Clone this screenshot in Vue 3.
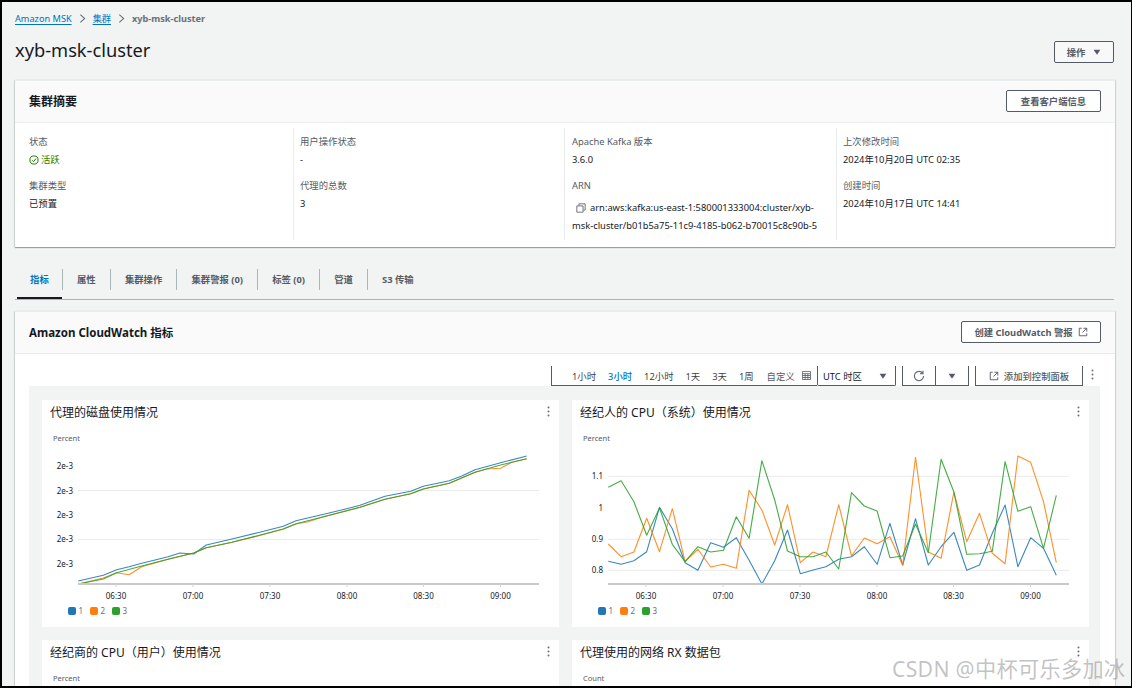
<script setup>
const xAt = i => 36.3 + 12.8 * i
const toLine = ys => ys.map((y, i) => `${xAt(i).toFixed(1)},${(y / 3 + 4).toFixed(1)}`).join(' ')
const toPairs = ps => ps.map(([x, y]) => `${(x / 3 - 2).toFixed(1)},${(y / 3 + 4).toFixed(1)}`).join(' ')
const BLUE = '#1f77b4', ORANGE = '#ff7f0e', GREEN = '#2ca02c'

const green = [[115,462],[190,447],[230,428],[305,408],[384,388],[461,369],[499,353],[576,337],[653,317],[730,297],[768,281],[845,262],[960,232],[1035,208],[1112,191],[1150,177],[1228,160],[1305,127],[1382,105],[1460,86]]
const blue = [[115,453],[190,436],[230,419],[267,410],[305,400],[345,390],[384,380],[420,369],[461,372],[499,345],[576,327],[653,308],[730,289],[768,272],[845,254],[920,236],[960,226],[1035,199],[1112,184],[1150,169],[1228,152],[1265,138],[1305,119],[1382,98],[1460,78]]
const orange = [[115,462],[190,444],[230,428],[267,434],[305,410],[384,388],[461,369],[499,353],[576,337],[653,318],[730,297],[768,282],[805,275],[845,262],[960,232],[1035,208],[1112,191],[1150,177],[1228,160],[1305,127],[1340,117],[1382,115],[1415,97],[1460,86]]

const rightBlue = [394,403,392,365,232,296,398,421,338,352,323,391,462,392,300,431,420,410,388,380,350,403,280,405,266,405,350,307,421,405,310,225,410,323,355,436]
const rightOrange = [342,380,366,265,365,236,395,358,411,403,415,181,240,345,224,398,366,380,224,378,324,341,320,406,82,366,385,186,335,250,370,401,78,97,215,398]
const rightGreen = [172,152,215,316,234,343,395,350,366,361,260,325,92,210,363,380,380,366,417,188,228,243,383,378,282,368,88,186,373,371,364,95,244,230,355,196]

const times = ['06:30', '07:00', '07:30', '08:00', '08:30', '09:00']
const timeX = [74, 151, 228, 305, 381.5, 458.5]
const legend = [
  { c: BLUE, l: '1', x: 26 },
  { c: ORANGE, l: '2', x: 48 },
  { c: GREEN, l: '3', x: 70 }
]

const widgets = [
  {
    title: '代理的磁盘使用情况', unit: 'Percent',
    ticks: [['2e-3', 40], ['2e-3', 64.5], ['2e-3', 89], ['2e-3', 113], ['2e-3', 138]],
    grid: [64.5, 113.5],
    series: [
      { c: BLUE, p: toPairs(blue) },
      { c: ORANGE, p: toPairs(orange) },
      { c: GREEN, p: toPairs(green) }
    ]
  },
  {
    title: '经纪人的 CPU（系统）使用情况', unit: 'Percent',
    ticks: [['1.1', 50], ['1', 82], ['0.9', 113], ['0.8', 144]],
    grid: [50.3, 113.3, 144.3],
    series: [
      { c: BLUE, p: toLine(rightBlue) },
      { c: ORANGE, p: toLine(rightOrange) },
      { c: GREEN, p: toLine(rightGreen) }
    ]
  },
  { title: '经纪商的 CPU（用户）使用情况', unit: 'Percent', ticks: [], grid: [], series: [], empty: true },
  { title: '代理使用的网络 RX 数据包', unit: 'Count', ticks: [], grid: [], series: [], empty: true }
]

const ranges = [
  { t: '1小时' }, { t: '3小时', on: true }, { t: '12小时' }, { t: '1天' }, { t: '3天' }, { t: '1周' }
]
const tabs = ['指标', '属性', '集群操作', '集群警报 (0)', '标签 (0)', '管道', 'S3 传输']
</script>

<template>
  <div class="frame">
    <nav class="crumbs">
      <a class="link">Amazon MSK</a>
      <svg class="chev" viewBox="0 0 8 12"><path d="M1.5 1.5 6.5 6l-5 4.5" /></svg>
      <a class="link">集群</a>
      <svg class="chev" viewBox="0 0 8 12"><path d="M1.5 1.5 6.5 6l-5 4.5" /></svg>
      <span class="current">xyb-msk-cluster</span>
    </nav>

    <header class="head">
      <h1>xyb-msk-cluster</h1>
      <button class="btn act">操作<svg class="tri" viewBox="0 0 10 8"><path d="M0.5 1h9L5 7.5z" /></svg></button>
    </header>

    <section class="card summary">
      <div class="card-head">
        <h2>集群摘要</h2>
        <button class="btn client">查看客户端信息</button>
      </div>
      <div class="cols">
        <div class="col first">
          <div class="lab">状态</div>
          <div class="val ok">
            <svg class="check" viewBox="0 0 12 12"><circle cx="6" cy="6" r="4.9" /><path d="M3.6 6.2 5.4 8l3-3.6" /></svg>活跃
          </div>
          <div class="lab gap">集群类型</div>
          <div class="val">已预置</div>
        </div>
        <div class="col">
          <div class="lab">用户操作状态</div>
          <div class="val">-</div>
          <div class="lab gap">代理的总数</div>
          <div class="val">3</div>
        </div>
        <div class="col third">
          <div class="lab">Apache Kafka 版本</div>
          <div class="val">3.6.0</div>
          <div class="lab gap">ARN</div>
          <div class="val arn">
            <svg class="copy" viewBox="0 0 12 12"><path d="M3.5 3V1h7.5v7.5H9M1 3.5h7.5V11H1z" /></svg>arn:aws:kafka:us-east-1:580001333004:cluster/xyb-<br />msk-cluster/b01b5a75-11c9-4185-b062-b70015c8c90b-5
          </div>
        </div>
        <div class="col last">
          <div class="lab">上次修改时间</div>
          <div class="val">2024年10月20日 UTC 02:35</div>
          <div class="lab gap">创建时间</div>
          <div class="val">2024年10月17日 UTC 14:41</div>
        </div>
      </div>
    </section>

    <div class="tabs">
      <div v-for="(t, i) in tabs" :key="t" class="tab" :class="{ active: i === 0 }">{{ t }}</div>
    </div>

    <section class="card metrics">
      <div class="card-head cw">
        <h2 class="cw-title">Amazon CloudWatch 指标</h2>
        <button class="btn alarm">创建 CloudWatch 警报
          <svg class="ext" viewBox="0 0 12 12"><path d="M4.5 1.5H1.5v9h9v-3M6.5 1.5h4v4M10.5 1.5 5.5 6.5" /></svg>
        </button>
      </div>

      <div class="toolbar">
        <div class="ranges">
          <span v-for="r in ranges" :key="r.t" class="range" :class="{ on: r.on }">{{ r.t }}</span>
          <span class="custom">自定义
            <svg class="cal" viewBox="0 0 10 10"><path d="M.5.5h9v9h-9zM.5 3h9M.5 5h9M.5 7.2h9M3.5 3v6.5M6.5 3v6.5" /></svg>
          </span>
        </div>
        <div class="tz">UTC 时区<svg class="tri" viewBox="0 0 10 8"><path d="M0.5 1h9L5 7.5z" /></svg></div>
        <div class="tb-btn refresh">
          <svg class="ref" viewBox="0 0 12 12"><path d="M9.8 3.4A4.6 4.6 0 1 0 10.6 6M10 .8v2.9H7.1" /></svg>
        </div>
        <div class="tb-btn more"><svg class="tri" viewBox="0 0 10 8"><path d="M0.5 1h9L5 7.5z" /></svg></div>
        <div class="tb-btn add">
          <svg class="ext dark" viewBox="0 0 12 12"><path d="M4.5 1.5H1.5v9h9v-3M6.5 1.5h4v4M10.5 1.5 5.5 6.5" /></svg>添加到控制面板
        </div>
        <svg class="dots tb-dots" viewBox="0 0 3 11"><circle cx="1.5" cy="1.5" r="1" /><circle cx="1.5" cy="5.5" r="1" /><circle cx="1.5" cy="9.5" r="1" /></svg>
      </div>

      <div class="dash">
        <article v-for="w in widgets" :key="w.title" class="widget">
          <div class="w-head">
            <h3>{{ w.title }}</h3>
            <svg class="dots" viewBox="0 0 3 11"><circle cx="1.5" cy="1.5" r="1" /><circle cx="1.5" cy="5.5" r="1" /><circle cx="1.5" cy="9.5" r="1" /></svg>
          </div>
          <svg class="chart" width="517" height="201" viewBox="0 0 517 201">
            <text x="11" y="15" class="unit">{{ w.unit }}</text>
            <template v-if="!w.empty">
              <line v-for="g in w.grid" :key="g" x1="36" x2="497" :y1="g" :y2="g" class="grid" />
              <text v-for="(t, i) in w.ticks" :key="i" x="31" :y="t[1] + 3" class="tick" text-anchor="end">{{ t[0] }}</text>
              <polyline v-for="s in w.series" :key="s.c" :points="s.p" fill="none" :stroke="s.c" stroke-width="1.1" stroke-opacity=".88" stroke-linejoin="round" />
              <rect x="36" y="157" width="461" height="2" fill="#c9c9c9" />
              <g v-for="(t, i) in times" :key="t">
                <line :x1="timeX[i]" :x2="timeX[i]" y1="158" y2="161" stroke="#d5d5d5" />
                <text :x="timeX[i]" y="173" class="tick" text-anchor="middle">{{ t }}</text>
              </g>
              <g v-for="l in legend" :key="l.l">
                <rect :x="l.x" y="181" width="8" height="8" rx="2" :fill="l.c" />
                <text :x="l.x + 10.5" y="188" class="leg">{{ l.l }}</text>
              </g>
            </template>
          </svg>
        </article>
      </div>
    </section>

    <div class="mark">CSDN @中杯可乐多加冰</div>
  </div>
</template>

<style>
html, body { margin: 0; background: #000; }
</style>

<style scoped>
* { box-sizing: border-box; }
.frame {
  position: relative;
  width: 1132px;
  height: 688px;
  overflow: hidden;
  background: #f2f3f3;
  border: solid #000;
  border-width: 2px 1px 2px 2px;
  padding: 0 16px 0 13px;
  font-family: "Noto Sans", "Noto Sans CJK SC", sans-serif;
  font-size: 9.35px;
  color: #16191f;
}
h1, h2, h3 { margin: 0; font-weight: 400; }
.crumbs {
  height: 32px;
  display: flex;
  align-items: center;
  gap: 7px;
  font-size: 9.2px;
}
.link { color: #0073bb; text-decoration: underline; text-underline-offset: 2px; }
.chev { width: 7px; height: 11px; fill: none; stroke: #687078; stroke-width: 1.2; }
.current { color: #687078; font-weight: 700; }
.head {
  height: 46px;
  display: flex;
  justify-content: space-between;
  align-items: flex-start;
  padding-right: 1px;
}
h1 { font-size: 18.25px; line-height: 32px; }
.btn {
  font: 700 9.35px "Noto Sans", "Noto Sans CJK SC", sans-serif;
  color: #545b64;
  background: #fff;
  border: 1px solid #545b64;
  border-radius: 2px;
  height: 22px;
  padding: 0;
  display: flex;
  align-items: center;
  justify-content: center;
}
.act { width: 60px; margin-top: 7px; gap: 8px; background: #f8f8f8; }
.tri { width: 8px; height: 6px; fill: #545b64; }
.card {
  background: #fff;
  box-shadow: 0 1px 1px rgba(0, 28, 36, .35), 1px 0 1px rgba(0, 28, 36, .1), -1px 0 1px rgba(0, 28, 36, .1);
}
.card-head {
  height: 43px;
  background: #fafafa;
  border-bottom: 1px solid #eaeded;
  border-top: 1px solid #eaeded;
  display: flex;
  align-items: center;
  justify-content: space-between;
  padding: 0 14px 2px;
}
h2 { font-size: 12px; font-weight: 700; }
.client { width: 95px; }
.summary { height: 167px; }
.cols {
  display: grid;
  grid-template-columns: 279px 271px 272px 1fr;
  padding-top: 5px;
  height: 117px;
}
.col { padding: 5px 4px 0 6px; border-right: 1px solid #eaeded; height: 112px; }
.col.first { padding-left: 14px; }
.col.third { padding-left: 7px; }
.col.last { border-right: 0; }
.lab { color: #545b64; line-height: 18px; }
.val { line-height: 18px; color: #16191f; }
.gap { margin-top: 8px; }
.ok { color: #1d8102; display: flex; align-items: center; gap: 2px; }
.check { width: 10px; height: 10px; fill: none; stroke: #1d8102; stroke-width: 1.2; }
.arn { margin-top: 4px; white-space: nowrap; }
.copy { width: 10px; height: 10px; fill: none; stroke: #545b64; stroke-width: 1; margin: 0 4px 0 4px; vertical-align: -2px; }
.tabs {
  margin-top: 21px;
  height: 32px;
  display: flex;
  padding-left: 2px;
  border-bottom: 1px solid #aab7b8;
  font-weight: 700;
  color: #545b64;
  position: relative;
  width: 1099px;
}
.tab {
  height: 21px;
  margin-top: 1px;
  padding: 0 14.1px;
  line-height: 22px;
  border-right: 1px solid #aab7b8;
  white-space: nowrap;
  position: relative;
}
.tab:last-child { border-right: 0; }
.tab.active { color: #0073bb; padding: 0 13.1px; }
.tab.active::after {
  content: "";
  position: absolute;
  left: 0;
  right: 0;
  top: 28px;
  height: 2px;
  background: #16191f;
}
.metrics { margin-top: 11px; height: 400px; overflow: hidden; }
.cw-title { font-size: 11.5px; }
.alarm { width: 140px; gap: 5px; }
.ext { width: 10px; height: 10px; fill: none; stroke: #545b64; stroke-width: 1.1; }
.toolbar {
  height: 32px;
  padding: 12px 0 0 536px;
  display: flex;
  align-items: stretch;
  color: #545b64;
}
.ranges {
  width: 266px;
  display: flex;
  align-items: center;
  gap: 12px;
  padding-left: 20px;
  border: solid #545b64;
  border-width: 0 0 1px 1px;
}
.range { white-space: nowrap; color: #16191f; opacity: .85; }
.range.on { color: #0073bb; opacity: 1; font-weight: 500; }
.custom { display: flex; align-items: center; gap: 7px; margin-left: 1px; white-space: nowrap; }
.cal { width: 9px; height: 9px; fill: none; stroke: #545b64; stroke-width: .9; }
.tz {
  width: 79px;
  display: flex;
  align-items: center;
  justify-content: space-between;
  padding: 0 8px 0 5px;
  color: #16191f;
  border: solid #545b64;
  border-width: 0 1px 1px 1px;
  border-bottom-left-radius: 2px;
  border-bottom-right-radius: 2px;
}
.tb-btn {
  display: flex;
  align-items: center;
  justify-content: center;
  border: solid #545b64;
  border-width: 0 1px 1px 1px;
}
.refresh { width: 34px; margin-left: 6px; }
.ref { width: 12px; height: 12px; fill: none; stroke: #687078; stroke-width: 1.2; }
.more { width: 34px; margin-left: -1px; }
.add { width: 108px; margin-left: 6px; gap: 5px; font-weight: 500; }
.dots { width: 3px; height: 11px; fill: #687078; }
.tb-dots { margin: 3px 0 0 8px; }
.dash {
  margin: 0 14px;
  background: #f2f3f3;
  padding: 14px 12px 0 13px;
  display: grid;
  grid-template-columns: 517px 517px;
  column-gap: 13px;
  row-gap: 13px;
  height: 320px;
  width: 1071px;
}
.widget { background: #fff; height: 227px; }
.w-head {
  height: 26px;
  display: flex;
  align-items: center;
  justify-content: space-between;
  padding: 0 9px 3px 8px;
}
h3 { font-size: 12px; color: #16191f; }
.chart { display: block; }
.unit { font: 7.5px "Noto Sans", sans-serif; fill: #545b64; }
.tick { font: 8px "Noto Sans", sans-serif; fill: #16191f; }
.leg { font: 8px "Noto Sans", sans-serif; fill: #687078; }
.grid { stroke: #ebebeb; stroke-width: 1; }
.mark {
  position: absolute;
  left: 890px;
  top: 650px;
  font-family: "Noto Sans", "Noto Sans CJK SC", sans-serif;
  font-size: 21.2px;
  color: rgba(120, 120, 120, .45);
  white-space: nowrap;
  letter-spacing: .3px;
}
</style>
